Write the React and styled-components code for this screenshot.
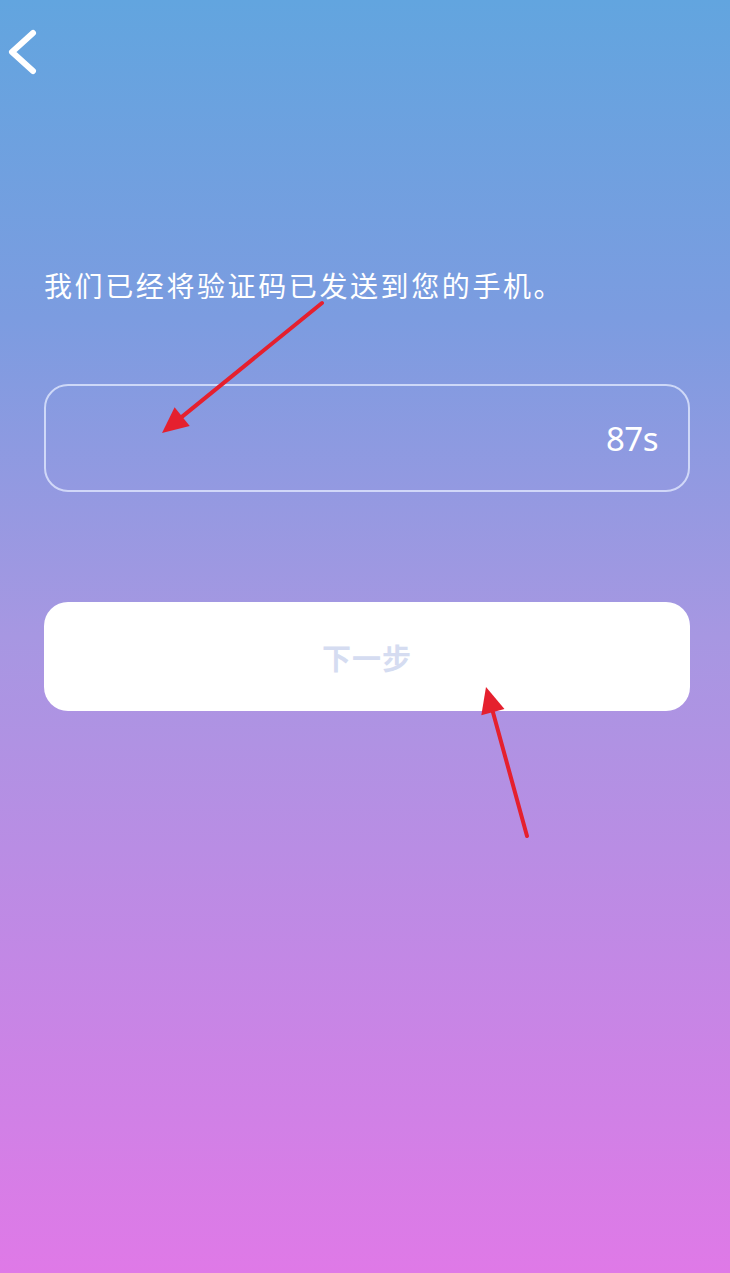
import React from 'react';
import styled, { createGlobalStyle } from 'styled-components';

const GlobalStyle = createGlobalStyle`
html, body {
  margin: 0;
  padding: 0;
}
body {
  font-family: "Noto Sans", "Noto Sans CJK SC", sans-serif;
}
`

const Screen = styled.div`
position: relative;
width: 730px;
height: 1273px;
box-sizing: border-box;
background: linear-gradient(180deg, #62a5df 0%, #7c9ce0 25%, #a797e2 50%, #c288e5 75%, #df79e7 100%);
display: flex;
flex-direction: column;
padding: 0 40px 0 44px;
overflow: hidden;
`

const BackButton = styled.button`
background: none;
border: none;
padding: 0;
margin: 28px 0 0 -42px;
width: 40px;
height: 50px;
cursor: pointer;
`

const Notice = styled.p`
margin: 187px 0 0 0;
color: #ffffff;
font-family: "Noto Sans CJK SC", sans-serif;
font-size: 28px;
line-height: 40px;
letter-spacing: 2.6px;
white-space: nowrap;
`

const CodeBox = styled.div`
margin-top: 79px;
height: 108px;
box-sizing: border-box;
border: 2px solid rgba(230, 236, 255, 0.75);
border-radius: 24px;
display: flex;
align-items: center;
justify-content: flex-end;
padding-right: 30px;
`

const Countdown = styled.span`
color: #ffffff;
font-family: "Noto Sans", sans-serif;
font-size: 33px;
letter-spacing: -0.5px;
`

const NextButton = styled.button`
margin-top: 110px;
height: 109px;
border: none;
border-radius: 24px;
background: #ffffff;
color: #d5dcf1;
font-family: "Noto Sans CJK SC", sans-serif;
font-weight: 700;
font-size: 29px;
letter-spacing: 1px;
cursor: pointer;
`

const Annotations = styled.svg`
position: absolute;
left: 0;
top: 0;
width: 730px;
height: 1273px;
pointer-events: none;
`

const Arrow = ({ x1, y1, x2, y2 }) => {
  const ang = Math.atan2(y2 - y1, x2 - x1);
  const len = 26, half = 12;
  const bx = x2 - Math.cos(ang) * len;
  const by = y2 - Math.sin(ang) * len;
  const px = -Math.sin(ang) * half;
  const py = Math.cos(ang) * half;
  return (
    <g>
      <line x1={x1} y1={y1} x2={bx} y2={by} stroke="#e5202e" strokeWidth="4" strokeLinecap="round" />
      <polygon points={`${x2},${y2} ${bx + px},${by + py} ${bx - px},${by - py}`} fill="#e5202e" />
    </g>
  );
}

const App = () => {
  return (
    <>
      <GlobalStyle />
      <Screen>
        <BackButton aria-label="back">
          <svg width="40" height="50" viewBox="0 0 40 50">
            <polyline points="31,5 10,24 31,43" fill="none" stroke="#fff" strokeWidth="6" strokeLinecap="round" strokeLinejoin="round" />
          </svg>
        </BackButton>
        <Notice>我们已经将验证码已发送到您的手机。</Notice>
        <CodeBox>
          <Countdown>87s</Countdown>
        </CodeBox>
        <NextButton>下一步</NextButton>
        <Annotations viewBox="0 0 730 1273">
          <Arrow x1={322} y1={303} x2={162} y2={433} />
          <Arrow x1={527} y1={836} x2={486} y2={687} />
        </Annotations>
      </Screen>
    </>
  );
}

export default App;
